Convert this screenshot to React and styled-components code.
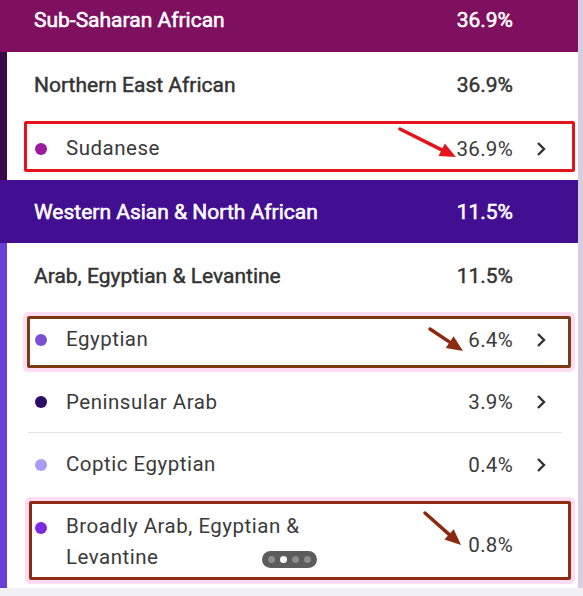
import React from 'react'
import styled, { createGlobalStyle } from 'styled-components'

const GlobalStyle = createGlobalStyle`
  html, body {
    margin: 0;
    padding: 0;
    background: #f1f1f3;
    font-family: Roboto, "Noto Sans", sans-serif;
  }
`

const groups = [
  {
    title: 'Sub-Saharan African',
    value: '36.9%',
    color: '#7f0f5f',
    strip: '#3a0a48',
    height: 52,
    sub: {
      title: 'Northern East African',
      value: '36.9%',
      items: [{ name: 'Sudanese', value: '36.9%', dot: '#9a1b9e', height: 62 }],
    },
  },
  {
    title: 'Western Asian & North African',
    value: '11.5%',
    color: '#420f93',
    strip: '#6a3fd6',
    height: 63,
    sub: {
      title: 'Arab, Egyptian & Levantine',
      value: '11.5%',
      items: [
        { name: 'Egyptian', value: '6.4%', dot: '#7b4fd2', height: 64 },
        { name: 'Peninsular Arab', value: '3.9%', dot: '#2a0c66', height: 61, divider: true },
        { name: 'Coptic Egyptian', value: '0.4%', dot: '#a99cf2', height: 64 },
        { name: 'Broadly Arab, Egyptian & Levantine', value: '0.8%', dot: '#7c2ae2', height: 91, wrap: true, noChevron: true },
      ],
    },
  },
]

const Frame = styled.div`
  position: relative;
  width: 583px;
  height: 596px;
  overflow: hidden;
  background: #f1f1f3;
`

const Card = styled.div`
  display: flex;
  flex-direction: column;
  width: 578px;
  height: 588px;
  background: #fff;
  border-right: 5px solid #d6cfe2;
  overflow: hidden;
`

const Header = styled.div`
  display: grid;
  grid-template-columns: 1fr auto 53px;
  align-items: center;
  height: ${p => p.$height}px;
  padding: 0 12px ${p => p.$pb || 0}px 34px;
  background: ${p => p.$color};
  color: #fff;
  font-size: 21px;
  font-weight: 400;
  -webkit-text-stroke: 0.55px #fff;
  box-sizing: border-box;
  flex-shrink: 0;
`

const Body = styled.div`
  display: flex;
  flex-direction: column;
  border-left: 7px solid ${p => p.$strip};
`

const SubHeader = styled.div`
  display: grid;
  grid-template-columns: 1fr auto 53px;
  align-items: center;
  height: ${p => p.$height}px;
  padding: 0 12px 0 27px;
  color: #333;
  font-size: 21px;
  font-weight: 400;
  -webkit-text-stroke: 0.45px #333;
`

const Row = styled.div`
  display: grid;
  grid-template-columns: 12px 1fr auto 53px;
  column-gap: 19px;
  align-items: center;
  height: ${p => p.$height}px;
  margin: 0 16px 0 21px;
  padding: 0 0 0 7px;
  box-sizing: border-box;
  color: #3a3a3a;
  font-size: 20.5px;
  letter-spacing: 0.5px;
  border-bottom: 1px solid ${p => (p.$divider ? '#e3e3e3' : 'transparent')};
`

const Dot = styled.span`
  width: 12px;
  height: 12px;
  border-radius: 50%;
  background: ${p => p.$color};
  align-self: ${p => (p.$top ? 'start' : 'center')};
  margin-top: ${p => (p.$top ? '25px' : '0')};
`

const Name = styled.span`
  line-height: 31px;
  max-width: ${p => (p.$wrap ? '260px' : 'none')};
`

const Value = styled.span`
  text-align: right;
  margin-right: -23px;
  letter-spacing: 0.3px;
  padding-top: ${p => (p.$low ? '6px' : '0')};
`

const HeadValue = styled.span`
  text-align: right;
`

const Chevron = styled.svg`
  justify-self: end;
  margin-right: 16px;
`

const Pager = styled.div`
  position: absolute;
  left: 262px;
  top: 551px;
  display: flex;
  align-items: center;
  gap: 5px;
  padding: 0 6px;
  height: 17px;
  border-radius: 9px;
  background: #5c5c5c;
`

const PagerDot = styled.span`
  width: 7px;
  height: 7px;
  border-radius: 50%;
  background: ${p => (p.$active ? '#fff' : '#8c8c8c')};
`

const Mark = styled.div`
  position: absolute;
  left: ${p => p.$x}px;
  top: ${p => p.$y}px;
  width: ${p => p.$w}px;
  height: ${p => p.$h}px;
  border: 3px solid ${p => p.$color};
  border-radius: 2px;
  box-sizing: border-box;
  box-shadow: ${p => (p.$glow ? '0 0 0 4px rgba(255, 190, 235, 0.55)' : 'none')};
  pointer-events: none;
`

const Arrows = styled.svg`
  position: absolute;
  left: 0;
  top: 0;
  pointer-events: none;
`

const ChevronIcon = () => (
  <Chevron width="10" height="16" viewBox="0 0 10 16">
    <path d="M2 2 L8 8 L2 14" fill="none" stroke="#333" strokeWidth="2.4" />
  </Chevron>
)

const Arrow = ({ x1, y1, x2, y2, color }) => {
  const ang = Math.atan2(y2 - y1, x2 - x1)
  const len = 16
  const w = 7
  const bx = x2 - len * Math.cos(ang)
  const by = y2 - len * Math.sin(ang)
  const px = -Math.sin(ang) * w
  const py = Math.cos(ang) * w
  return (
    <g>
      <line x1={x1} y1={y1} x2={bx} y2={by} stroke={color} strokeWidth="3.5" strokeLinecap="round" />
      <polygon points={`${x2},${y2} ${bx + px},${by + py} ${bx - px},${by - py}`} fill={color} />
    </g>
  )
}

const App = () => (
  <Frame>
    <GlobalStyle />
    <Card>
      {groups.map((g, i) => (
        <React.Fragment key={g.title}>
          <Header $color={g.color} $height={g.height} $pb={i === 0 ? 12 : 0}>
            <span>{g.title}</span>
            <HeadValue>{g.value}</HeadValue>
            <span />
          </Header>
          <Body $strip={g.strip}>
            <SubHeader $height={i === 0 ? 66 : 65}>
              <span>{g.sub.title}</span>
              <HeadValue>{g.sub.value}</HeadValue>
              <span />
            </SubHeader>
            {g.sub.items.map(it => (
              <Row key={it.name} $height={it.height} $divider={it.divider}>
                <Dot $color={it.dot} $top={it.wrap} />
                <Name $wrap={it.wrap}>{it.name}</Name>
                <Value $low={it.wrap}>{it.value}</Value>
                {it.noChevron ? <span /> : <ChevronIcon />}
              </Row>
            ))}
          </Body>
        </React.Fragment>
      ))}
    </Card>

    <Mark $x={24} $y={121} $w={551} $h={51} $color="#e5141b" />
    <Mark $x={27} $y={316} $w={544} $h={52} $color="#7a3a12" $glow />
    <Mark $x={29} $y={501} $w={542} $h={79} $color="#8f2b12" $glow />

    <Pager>
      <PagerDot />
      <PagerDot $active />
      <PagerDot />
      <PagerDot />
    </Pager>

    <Arrows width="583" height="596">
      <Arrow x1={400} y1={129} x2={456} y2={157} color="#e5141b" />
      <Arrow x1={430} y1={329} x2={463} y2={351} color="#8a2a12" />
      <Arrow x1={425} y1={513} x2={461} y2={545} color="#8a2a12" />
    </Arrows>
  </Frame>
)

export default App
